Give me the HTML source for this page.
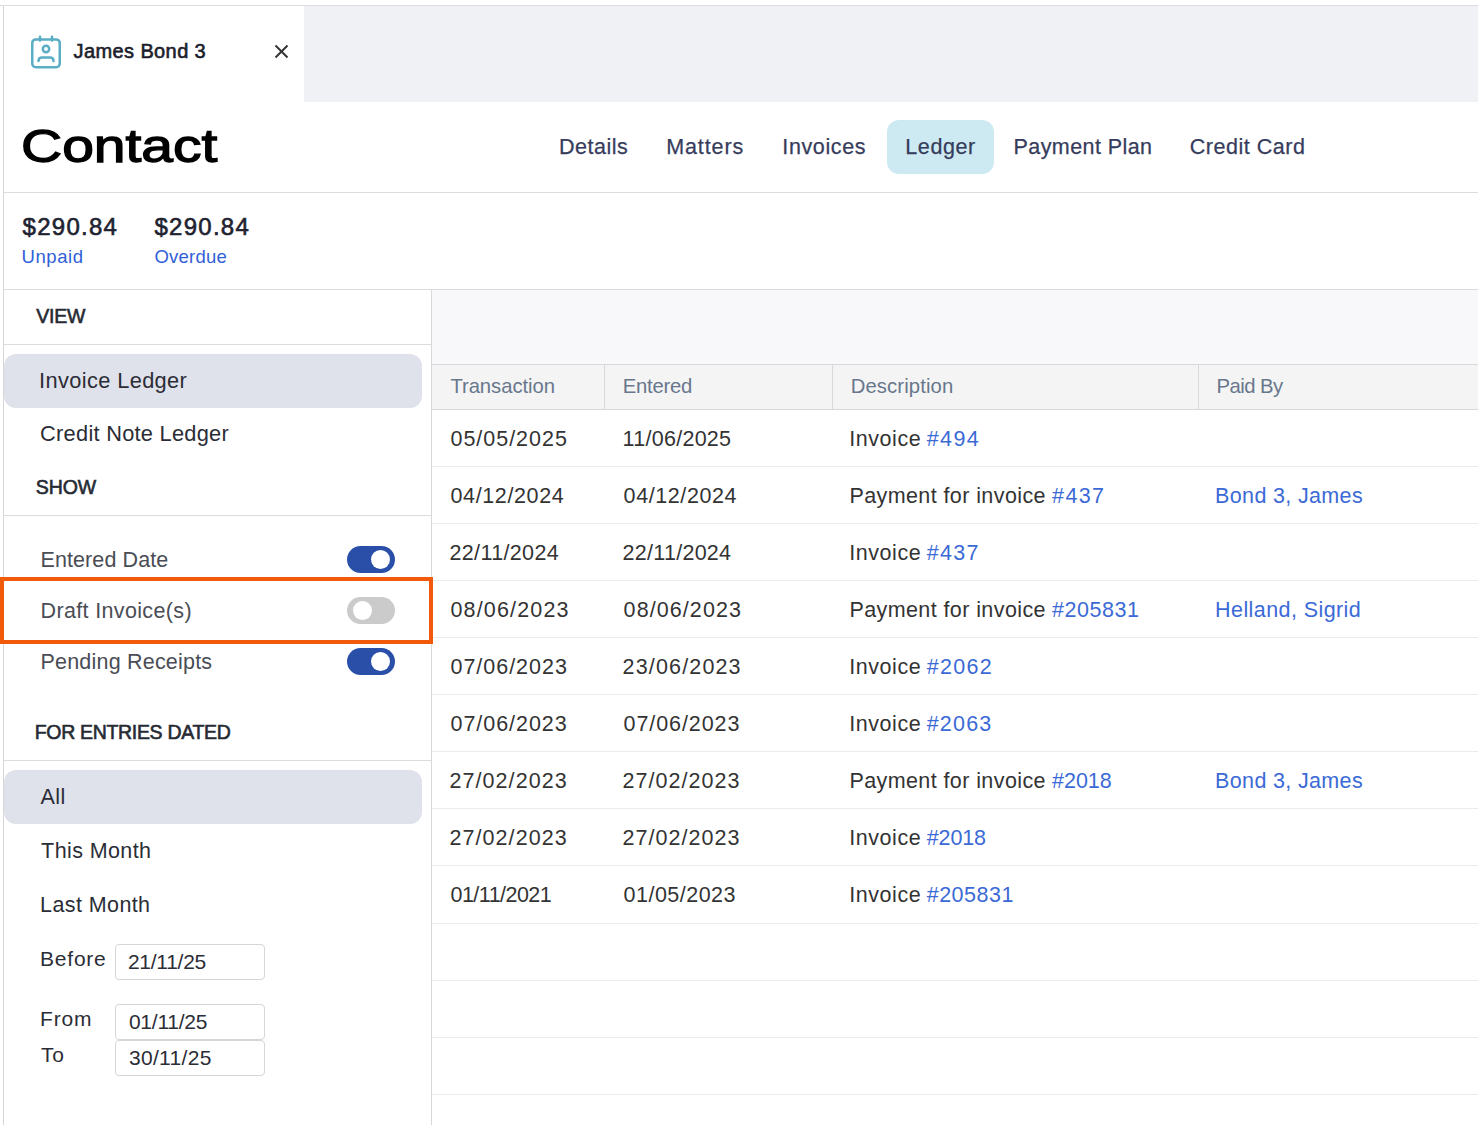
<!DOCTYPE html>
<html><head><meta charset="utf-8"><style>
html,body{margin:0;padding:0;background:#fff;width:1478px;height:1125px;overflow:hidden;position:relative}
body{font-family:"Liberation Sans",sans-serif}
.t{position:absolute;white-space:nowrap}
.b{position:absolute}
.rl{position:absolute;left:432px;width:1046px;height:1px;background:#ebebeb}
.tg{position:absolute;left:347px;width:48px;height:27px;border-radius:14px}
.tg.on{background:#2a4fa8}
.tg.off{background:#cbcbcb}
.kn{position:absolute;top:4px;width:19px;height:19px;border-radius:50%;background:#fff}
.inp{position:absolute;left:115px;width:148px;height:34px;border:1px solid #d6d6d6;border-radius:4px;background:#fff}
</style></head><body>
<div class="b" style="left:0;top:5px;width:1478px;height:1px;background:#dcdee3"></div>
<div class="b" style="left:3px;top:6px;width:1px;height:1119px;background:#d6d6d6"></div>
<div class="b" style="left:304px;top:6px;width:1174px;height:96px;background:#f0f1f5"></div>
<svg class="b" style="left:25px;top:30px" width="40" height="40" viewBox="0 0 40 40" fill="none" stroke="#5aadc5" stroke-width="2.5" stroke-linecap="round" stroke-linejoin="round">
<rect x="7.25" y="9.45" width="27.5" height="27.7" rx="3.5"/>
<line x1="15" y1="6.7" x2="15" y2="10.5"/><line x1="27" y1="6.7" x2="27" y2="10.5"/>
<circle cx="21" cy="19" r="3.2"/>
<path d="M13.5 31 C13.5 28.5 15 27.5 17 27.5 H25 C27 27.5 28.5 28.5 28.5 31"/>
</svg>
<svg class="b" style="left:272.3px;top:42px" width="19" height="19" viewBox="0 0 19 19" stroke="#333" stroke-width="1.9" stroke-linecap="butt"><line x1="3.5" y1="3.5" x2="15.5" y2="15.5"/><line x1="15.5" y1="3.5" x2="3.5" y2="15.5"/></svg>
<div class="b" style="left:4px;top:192px;width:1474px;height:1px;background:#dcdcdc"></div>
<div class="b" style="left:887px;top:120px;width:107px;height:54px;border-radius:12px;background:#cdeaf3"></div>
<div class="b" style="left:4px;top:289px;width:1474px;height:1px;background:#dcdcdc"></div>
<div class="b" style="left:431px;top:290px;width:1px;height:835px;background:#d9d9d9"></div>
<div class="b" style="left:4px;top:344px;width:427px;height:1px;background:#dcdcdc"></div>
<div class="b" style="left:4px;top:354px;width:418px;height:54px;border-radius:12px;background:#e0e2eb"></div>
<div class="b" style="left:4px;top:515px;width:427px;height:1px;background:#dcdcdc"></div>
<div class="tg on" style="top:546px"><div class="kn" style="left:24px"></div></div><div class="tg off" style="top:597px"><div class="kn" style="left:6px"></div></div><div class="tg on" style="top:648px"><div class="kn" style="left:24px"></div></div>
<div class="b" style="left:4px;top:760px;width:427px;height:1px;background:#dcdcdc"></div>
<div class="b" style="left:4px;top:770px;width:418px;height:54px;border-radius:12px;background:#e0e2eb"></div>
<div class="inp" style="top:944px"></div>
<div class="inp" style="top:1004px"></div>
<div class="inp" style="top:1040px"></div>
<div class="b" style="left:432px;top:290px;width:1046px;height:74px;background:#f8f8fa"></div>
<div class="b" style="left:432px;top:364px;width:1046px;height:1px;background:#d9d9d9"></div>
<div class="b" style="left:432px;top:365px;width:1046px;height:44px;background:#f4f4f4"></div>
<div class="b" style="left:432px;top:409px;width:1046px;height:1px;background:#d9d9d9"></div>
<div class="b" style="left:604px;top:365px;width:1px;height:44px;background:#d9d9d9"></div>
<div class="b" style="left:832px;top:365px;width:1px;height:44px;background:#d9d9d9"></div>
<div class="b" style="left:1198px;top:365px;width:1px;height:44px;background:#d9d9d9"></div>
<div class="rl" style="top:466px"></div><div class="rl" style="top:523px"></div><div class="rl" style="top:580px"></div><div class="rl" style="top:637px"></div><div class="rl" style="top:694px"></div><div class="rl" style="top:751px"></div><div class="rl" style="top:808px"></div><div class="rl" style="top:865px"></div><div class="rl" style="top:923px"></div><div class="rl" style="top:980px"></div><div class="rl" style="top:1037px"></div><div class="rl" style="top:1094px"></div>
<div class="b" style="left:0;top:577px;width:425px;height:59px;border:4px solid #f05a0a"></div>
<div class="t" style="left:73.60px;top:40.80px;font-size:20.0px;line-height:20.0px;font-weight:400;color:#1b1d2b;letter-spacing:0.388px;-webkit-text-stroke:0.6px #1b1d2b">James Bond 3</div>
<div class="t" style="left:21.47px;top:122.30px;font-size:47px;line-height:47px;font-weight:400;color:#000;letter-spacing:0.000px;-webkit-text-stroke:1.3px #000;transform:scaleX(1.2125);transform-origin:0 0">Contact</div>
<div class="t" style="left:559.00px;top:137.25px;font-size:21.5px;line-height:21.5px;font-weight:400;color:#363c5c;letter-spacing:0.505px;-webkit-text-stroke:0.25px #363c5c">Details</div>
<div class="t" style="left:666.20px;top:137.25px;font-size:21.5px;line-height:21.5px;font-weight:400;color:#363c5c;letter-spacing:0.895px;-webkit-text-stroke:0.25px #363c5c">Matters</div>
<div class="t" style="left:782.30px;top:137.25px;font-size:21.5px;line-height:21.5px;font-weight:400;color:#363c5c;letter-spacing:0.625px;-webkit-text-stroke:0.25px #363c5c">Invoices</div>
<div class="t" style="left:905.30px;top:137.25px;font-size:21.5px;line-height:21.5px;font-weight:400;color:#363c5c;letter-spacing:0.603px;-webkit-text-stroke:0.25px #363c5c">Ledger</div>
<div class="t" style="left:1013.60px;top:137.25px;font-size:21.5px;line-height:21.5px;font-weight:400;color:#363c5c;letter-spacing:0.410px;-webkit-text-stroke:0.25px #363c5c">Payment Plan</div>
<div class="t" style="left:1189.80px;top:137.25px;font-size:21.5px;line-height:21.5px;font-weight:400;color:#363c5c;letter-spacing:0.523px;-webkit-text-stroke:0.25px #363c5c">Credit Card</div>
<div class="t" style="left:22.60px;top:214.60px;font-size:24px;line-height:24px;font-weight:400;color:#1f2330;letter-spacing:1.249px;-webkit-text-stroke:0.6px #1f2330">$290.84</div>
<div class="t" style="left:154.50px;top:214.60px;font-size:24px;line-height:24px;font-weight:400;color:#1f2330;letter-spacing:1.249px;-webkit-text-stroke:0.6px #1f2330">$290.84</div>
<div class="t" style="left:21.60px;top:248.45px;font-size:18.5px;line-height:18.5px;font-weight:400;color:#2f60d8;letter-spacing:0.553px">Unpaid</div>
<div class="t" style="left:154.50px;top:248.45px;font-size:18.5px;line-height:18.5px;font-weight:400;color:#2f60d8;letter-spacing:0.206px">Overdue</div>
<div class="t" style="left:36.30px;top:307.05px;font-size:19.5px;line-height:19.5px;font-weight:400;color:#262a33;letter-spacing:-0.210px;-webkit-text-stroke:0.6px #262a33">VIEW</div>
<div class="t" style="left:35.70px;top:478.45px;font-size:19.5px;line-height:19.5px;font-weight:400;color:#262a33;letter-spacing:-0.052px;-webkit-text-stroke:0.6px #262a33">SHOW</div>
<div class="t" style="left:34.70px;top:722.95px;font-size:19.5px;line-height:19.5px;font-weight:400;color:#262a33;letter-spacing:-0.317px;-webkit-text-stroke:0.6px #262a33">FOR ENTRIES DATED</div>
<div class="t" style="left:39.10px;top:369.70px;font-size:21.8px;line-height:21.8px;font-weight:400;color:#2b2d36;letter-spacing:0.367px">Invoice Ledger</div>
<div class="t" style="left:40.10px;top:422.80px;font-size:21.8px;line-height:21.8px;font-weight:400;color:#2b2d36;letter-spacing:0.264px">Credit Note Ledger</div>
<div class="t" style="left:40.50px;top:550.25px;font-size:21.5px;line-height:21.5px;font-weight:400;color:#4a4d55;letter-spacing:0.097px">Entered Date</div>
<div class="t" style="left:40.50px;top:601.35px;font-size:21.5px;line-height:21.5px;font-weight:400;color:#4a4d55;letter-spacing:0.354px">Draft Invoice(s)</div>
<div class="t" style="left:40.50px;top:651.85px;font-size:21.5px;line-height:21.5px;font-weight:400;color:#4a4d55;letter-spacing:0.202px">Pending Receipts</div>
<div class="t" style="left:40.50px;top:787.45px;font-size:21.5px;line-height:21.5px;font-weight:400;color:#2b2d36;letter-spacing:0.500px">All</div>
<div class="t" style="left:41.10px;top:841.45px;font-size:21.5px;line-height:21.5px;font-weight:400;color:#2b2d36;letter-spacing:0.401px">This Month</div>
<div class="t" style="left:40.10px;top:895.25px;font-size:21.5px;line-height:21.5px;font-weight:400;color:#2b2d36;letter-spacing:0.401px">Last Month</div>
<div class="t" style="left:40.10px;top:947.60px;font-size:21px;line-height:21px;font-weight:400;color:#2b2d36;letter-spacing:0.761px">Before</div>
<div class="t" style="left:40.10px;top:1008.00px;font-size:21px;line-height:21px;font-weight:400;color:#2b2d36;letter-spacing:0.761px">From</div>
<div class="t" style="left:41.10px;top:1043.70px;font-size:21px;line-height:21px;font-weight:400;color:#2b2d36;letter-spacing:0.761px">To</div>
<div class="t" style="left:127.90px;top:950.60px;font-size:21px;line-height:21px;font-weight:400;color:#2b2d36;letter-spacing:-0.258px">21/11/25</div>
<div class="t" style="left:128.90px;top:1010.70px;font-size:21px;line-height:21px;font-weight:400;color:#2b2d36;letter-spacing:-0.229px">01/11/25</div>
<div class="t" style="left:128.90px;top:1046.50px;font-size:21px;line-height:21px;font-weight:400;color:#2b2d36;letter-spacing:0.328px">30/11/25</div>
<div class="t" style="left:450.40px;top:375.95px;font-size:20.3px;line-height:20.3px;font-weight:400;color:#68778c;letter-spacing:-0.063px">Transaction</div>
<div class="t" style="left:622.70px;top:375.95px;font-size:20.3px;line-height:20.3px;font-weight:400;color:#68778c;letter-spacing:-0.242px">Entered</div>
<div class="t" style="left:850.70px;top:375.95px;font-size:20.3px;line-height:20.3px;font-weight:400;color:#68778c;letter-spacing:0.113px">Description</div>
<div class="t" style="left:1216.60px;top:375.95px;font-size:20.3px;line-height:20.3px;font-weight:400;color:#68778c;letter-spacing:-0.559px">Paid By</div>
<div class="t" style="left:450.50px;top:429.05px;font-size:21.5px;line-height:21.5px;font-weight:400;color:#333333;letter-spacing:0.972px">05/05/2025</div>
<div class="t" style="left:622.60px;top:429.05px;font-size:21.5px;line-height:21.5px;font-weight:400;color:#333333;letter-spacing:0.272px">11/06/2025</div>
<div class="t" style="left:849.20px;top:429.05px;font-size:21.5px;line-height:21.5px;font-weight:400;color:#333333;letter-spacing:0.556px">Invoice</div>
<div class="t" style="left:926.70px;top:429.05px;font-size:21.5px;line-height:21.5px;font-weight:400;color:#3b6ad6;letter-spacing:1.409px">#494</div>
<div class="t" style="left:450.50px;top:486.05px;font-size:21.5px;line-height:21.5px;font-weight:400;color:#333333;letter-spacing:0.617px">04/12/2024</div>
<div class="t" style="left:623.60px;top:486.05px;font-size:21.5px;line-height:21.5px;font-weight:400;color:#333333;letter-spacing:0.595px">04/12/2024</div>
<div class="t" style="left:849.40px;top:486.05px;font-size:21.5px;line-height:21.5px;font-weight:400;color:#333333;letter-spacing:0.408px">Payment for invoice</div>
<div class="t" style="left:1052.10px;top:486.05px;font-size:21.5px;line-height:21.5px;font-weight:400;color:#3b6ad6;letter-spacing:1.343px">#437</div>
<div class="t" style="left:1215.10px;top:486.05px;font-size:21.5px;line-height:21.5px;font-weight:400;color:#3b6ad6;letter-spacing:0.345px">Bond 3, James</div>
<div class="t" style="left:449.50px;top:543.05px;font-size:21.5px;line-height:21.5px;font-weight:400;color:#333333;letter-spacing:0.350px">22/11/2024</div>
<div class="t" style="left:622.60px;top:543.05px;font-size:21.5px;line-height:21.5px;font-weight:400;color:#333333;letter-spacing:0.272px">22/11/2024</div>
<div class="t" style="left:849.20px;top:543.05px;font-size:21.5px;line-height:21.5px;font-weight:400;color:#333333;letter-spacing:0.556px">Invoice</div>
<div class="t" style="left:926.70px;top:543.05px;font-size:21.5px;line-height:21.5px;font-weight:400;color:#3b6ad6;letter-spacing:1.276px">#437</div>
<div class="t" style="left:450.50px;top:600.05px;font-size:21.5px;line-height:21.5px;font-weight:400;color:#333333;letter-spacing:1.161px">08/06/2023</div>
<div class="t" style="left:623.60px;top:600.05px;font-size:21.5px;line-height:21.5px;font-weight:400;color:#333333;letter-spacing:1.084px">08/06/2023</div>
<div class="t" style="left:849.40px;top:600.05px;font-size:21.5px;line-height:21.5px;font-weight:400;color:#333333;letter-spacing:0.408px">Payment for invoice</div>
<div class="t" style="left:1052.10px;top:600.05px;font-size:21.5px;line-height:21.5px;font-weight:400;color:#3b6ad6;letter-spacing:0.543px">#205831</div>
<div class="t" style="left:1215.10px;top:600.05px;font-size:21.5px;line-height:21.5px;font-weight:400;color:#3b6ad6;letter-spacing:0.417px">Helland, Sigrid</div>
<div class="t" style="left:450.50px;top:657.05px;font-size:21.5px;line-height:21.5px;font-weight:400;color:#333333;letter-spacing:0.972px">07/06/2023</div>
<div class="t" style="left:622.60px;top:657.05px;font-size:21.5px;line-height:21.5px;font-weight:400;color:#333333;letter-spacing:1.150px">23/06/2023</div>
<div class="t" style="left:849.20px;top:657.05px;font-size:21.5px;line-height:21.5px;font-weight:400;color:#333333;letter-spacing:0.556px">Invoice</div>
<div class="t" style="left:926.70px;top:657.05px;font-size:21.5px;line-height:21.5px;font-weight:400;color:#3b6ad6;letter-spacing:1.318px">#2062</div>
<div class="t" style="left:450.50px;top:714.05px;font-size:21.5px;line-height:21.5px;font-weight:400;color:#333333;letter-spacing:0.950px">07/06/2023</div>
<div class="t" style="left:623.60px;top:714.05px;font-size:21.5px;line-height:21.5px;font-weight:400;color:#333333;letter-spacing:0.906px">07/06/2023</div>
<div class="t" style="left:849.20px;top:714.05px;font-size:21.5px;line-height:21.5px;font-weight:400;color:#333333;letter-spacing:0.556px">Invoice</div>
<div class="t" style="left:926.70px;top:714.05px;font-size:21.5px;line-height:21.5px;font-weight:400;color:#3b6ad6;letter-spacing:1.193px">#2063</div>
<div class="t" style="left:449.50px;top:771.05px;font-size:21.5px;line-height:21.5px;font-weight:400;color:#333333;letter-spacing:1.061px">27/02/2023</div>
<div class="t" style="left:622.60px;top:771.05px;font-size:21.5px;line-height:21.5px;font-weight:400;color:#333333;letter-spacing:1.017px">27/02/2023</div>
<div class="t" style="left:849.40px;top:771.05px;font-size:21.5px;line-height:21.5px;font-weight:400;color:#333333;letter-spacing:0.408px">Payment for invoice</div>
<div class="t" style="left:1052.10px;top:771.05px;font-size:21.5px;line-height:21.5px;font-weight:400;color:#3b6ad6;letter-spacing:-0.057px">#2018</div>
<div class="t" style="left:1215.10px;top:771.05px;font-size:21.5px;line-height:21.5px;font-weight:400;color:#3b6ad6;letter-spacing:0.345px">Bond 3, James</div>
<div class="t" style="left:449.50px;top:828.05px;font-size:21.5px;line-height:21.5px;font-weight:400;color:#333333;letter-spacing:1.061px">27/02/2023</div>
<div class="t" style="left:622.60px;top:828.05px;font-size:21.5px;line-height:21.5px;font-weight:400;color:#333333;letter-spacing:1.017px">27/02/2023</div>
<div class="t" style="left:849.20px;top:828.05px;font-size:21.5px;line-height:21.5px;font-weight:400;color:#333333;letter-spacing:0.556px">Invoice</div>
<div class="t" style="left:926.70px;top:828.05px;font-size:21.5px;line-height:21.5px;font-weight:400;color:#3b6ad6;letter-spacing:-0.107px">#2018</div>
<div class="t" style="left:450.50px;top:885.05px;font-size:21.5px;line-height:21.5px;font-weight:400;color:#333333;letter-spacing:-0.528px">01/11/2021</div>
<div class="t" style="left:623.60px;top:885.05px;font-size:21.5px;line-height:21.5px;font-weight:400;color:#333333;letter-spacing:0.472px">01/05/2023</div>
<div class="t" style="left:849.20px;top:885.05px;font-size:21.5px;line-height:21.5px;font-weight:400;color:#333333;letter-spacing:0.556px">Invoice</div>
<div class="t" style="left:926.70px;top:885.05px;font-size:21.5px;line-height:21.5px;font-weight:400;color:#3b6ad6;letter-spacing:0.509px">#205831</div>
</body></html>
